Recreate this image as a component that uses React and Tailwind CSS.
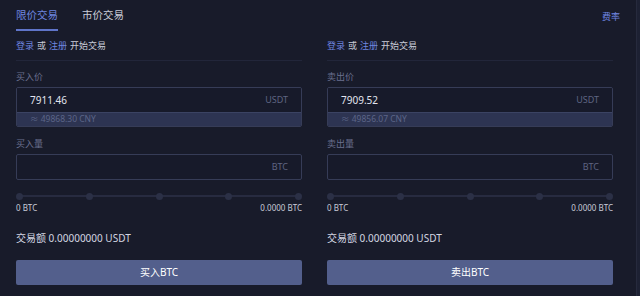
export default function App() {
  const sides = [
    { label: '买入价', price: '7911.46', cny: '≈ 49868.30 CNY', qty: '买入量', btn: '买入BTC' },
    { label: '卖出价', price: '7909.52', cny: '≈ 49856.07 CNY', qty: '卖出量', btn: '卖出BTC' },
  ]

  return (
    <div className="w-[640px] h-[296px] overflow-hidden bg-[#181b2a] flex" style={{ fontFamily: '"Noto Sans", "Noto Sans CJK SC", sans-serif' }}>
      <div className="flex-1 flex flex-col">
        {/* tabs */}
        <div className="flex items-start px-4 pt-[7px] h-[31px] relative">
          <div className="flex flex-col">
            <span className="text-[10.5px] leading-[17px] text-[#6f86e0]">限价交易</span>
            <div className="h-[2px] mt-[5px] bg-[#5f74c8] w-full" />
          </div>
          <span className="ml-[24px] text-[10.5px] leading-[17px] text-[#c9ccd8]">市价交易</span>
          <span className="ml-auto mt-[3px] text-[9px] leading-[14px] text-[#6f86e0]">费率</span>
        </div>

        <div className="flex gap-[25px] px-4">
          {sides.map((s) => (
            <div key={s.btn} className="w-[286px] flex flex-col">
              <div className="h-[30px] flex items-center text-[9px] border-b border-[#22263a]">
                <span className="text-[#6f86e0]">登录</span>
                <span className="text-[#c9ccd8] mx-[3px]">或</span>
                <span className="text-[#6f86e0]">注册</span>
                <span className="text-[#c9ccd8] ml-[3px]">开始交易</span>
              </div>

              <div className="mt-[10px] text-[9px] leading-[12px] text-[#6b7190]">{s.label}</div>
              <div className="mt-[4px] border border-[#363c57] rounded-[2px] overflow-hidden">
                <div className="h-[24px] flex items-center justify-between px-[13px] bg-[#171a2a]">
                  <span className="text-[10px] text-[#e2e5ef]">{s.price}</span>
                  <span className="text-[9px] text-[#5f6582]">USDT</span>
                </div>
                <div className="h-[14px] flex items-center px-[13px] bg-[#2d3452] border-t border-[#3b4363]">
                  <span className="text-[8.5px] text-[#5c6588]">{s.cny}</span>
                </div>
              </div>

              <div className="mt-[11px] text-[9px] leading-[12px] text-[#6b7190]">{s.qty}</div>
              <div className="mt-[4px] h-[26px] border border-[#363c57] rounded-[2px] bg-[#171a2a] flex items-center justify-end px-[13px]">
                <span className="text-[9px] text-[#5f6582]">BTC</span>
              </div>

              <div className="mt-[12px] h-[8px] relative flex items-center">
                <div className="absolute left-[3px] right-[3px] h-[2px] bg-[#272b40]" />
                <div className="relative w-full flex justify-between">
                  {[0, 1, 2, 3, 4].map((i) => (
                    <span key={i} className="w-[7px] h-[7px] rounded-full bg-[#2b3046]" />
                  ))}
                </div>
              </div>
              <div className="mt-[3px] flex justify-between text-[8px] leading-[10px] text-[#c9ccd8]">
                <span>0 BTC</span>
                <span>0.0000 BTC</span>
              </div>

              <div className="mt-[18px] text-[10px] leading-[14px] text-[#d3d6e1]">交易额 0.00000000 USDT</div>

              <button className="mt-[15px] h-[25px] w-full rounded-[2px] bg-[#535f8c] text-[10px] text-white">{s.btn}</button>
            </div>
          ))}
        </div>
      </div>
      <div className="w-[4px] bg-[#1d2133] border-l border-[#262a3d]" />
    </div>
  )
}
